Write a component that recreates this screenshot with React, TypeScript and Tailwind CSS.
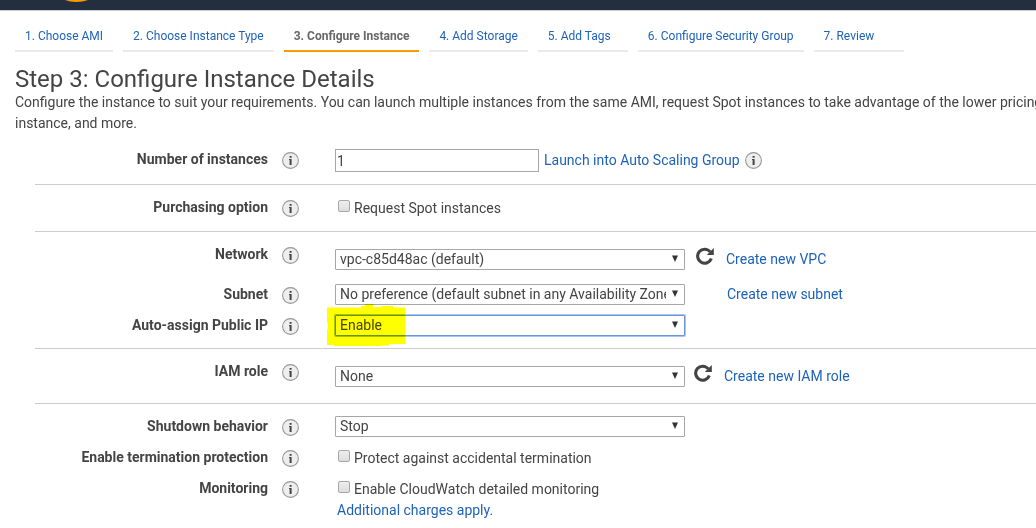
import type { ReactNode } from "react";

type Step = { label: string; current?: boolean };

const steps: Step[] = [
  { label: "1. Choose AMI" },
  { label: "2. Choose Instance Type" },
  { label: "3. Configure Instance", current: true },
  { label: "4. Add Storage" },
  { label: "5. Add Tags" },
  { label: "6. Configure Security Group" },
  { label: "7. Review" },
];

function InfoButton({ topic }: { topic: string }) {
  return (
    <button type="button" aria-label={`About ${topic}`} className="block size-[17px] shrink-0">
      <svg viewBox="0 0 17 17" className="size-full" aria-hidden="true">
        <circle cx="8.5" cy="8.5" r="7.9" fill="#eeeeee" stroke="#999999" strokeWidth="1.1" />
        <path d="M7.6 4h2v1.8h-2zM7 7h2.6v6h-2V8.1H7z" fill="#444444" />
      </svg>
    </button>
  );
}

function RefreshButton({ label }: { label: string }) {
  return (
    <button type="button" aria-label={label} className="block size-[18px] shrink-0">
      <svg viewBox="0 0 18 18" className="size-full" aria-hidden="true">
        <path d="M14.2 4.9A7 7 0 1 0 15.3 11.4" fill="none" stroke="#444444" strokeWidth="3.1" />
        <path d="M17.8 1V7.9H10.8z" fill="#444444" />
      </svg>
    </button>
  );
}

function TextLink({ children }: { children: ReactNode }) {
  return (
    <a href="#" className="whitespace-nowrap text-[#1e62b8] hover:underline">
      {children}
    </a>
  );
}

function Section({ children, className = "pb-3" }: { children: ReactNode; className?: string }) {
  return (
    <div className={`flex flex-col gap-[9px] border-b border-[#cccccc] pt-3 last:border-b-0 ${className}`}>
      {children}
    </div>
  );
}

type RowProps = { id: string; label: string; children: ReactNode; className?: string };

function Row({ id, label, children, className = "" }: RowProps) {
  return (
    <div className="flex min-h-[22px] items-start">
      <label htmlFor={id} className="w-[233px] shrink-0 text-right font-bold">
        {label}
      </label>
      <div className="ml-3.5 mr-9 pt-[3px]">
        <InfoButton topic={label} />
      </div>
      <div className={`min-w-0 grow ${className}`}>{children}</div>
    </div>
  );
}

function Dropdown({ id, value, focused = false }: { id: string; value: string; focused?: boolean }) {
  return (
    <div className="relative w-[350px] shrink-0">
      <select
        id={id}
        className={`block h-[21px] w-full appearance-none rounded-[1px] border bg-white pl-1 pr-[18px] leading-[19px] outline-none ${
          focused ? "border-[#6a95dc] ring-1 ring-[#a9c5f5]" : "border-[#a6a6a6]"
        }`}
      >
        <option>{value}</option>
      </select>
      <svg viewBox="0 0 6 7" className="pointer-events-none absolute right-[7px] top-[6px] h-[7px] w-[6px]" aria-hidden="true">
        <path d="M0 .5h6L3 7z" fill="#333333" />
      </svg>
    </div>
  );
}

function Checkbox({ id, label }: { id: string; label: string }) {
  return (
    <div className="ml-[3px] flex items-start gap-1 pt-px">
      <input
        id={id}
        type="checkbox"
        className="mt-[2px] size-3 shrink-0 appearance-none rounded-[2px] border border-[#a8a8a8] bg-linear-to-b from-[#eeeeee] to-[#dddddd]"
      />
      <label htmlFor={id}>{label}</label>
    </div>
  );
}

export default function App() {
  return (
    <div className="overflow-hidden bg-white font-[Roboto,'Liberation_Sans',sans-serif] text-[14px] leading-[21px] text-[#444444]">
      <header className="h-[11px] border-b border-[#cccccc] bg-[#232f3e]">
        <svg viewBox="0 0 30 3" className="ml-[62px] block h-[3px] w-[30px]" aria-hidden="true">
          <path d="M3 0H26Q21 2.1 14.5 2.1T3 0z" fill="#ff9900" />
        </svg>
      </header>

      <nav aria-label="Launch steps" className="px-[15px] pt-[15px]">
        <ol className="flex gap-2.5 text-[12px] leading-5">
          {steps.map((step) => (
            <li
              key={step.label}
              className={`min-w-[90px] border-b-2 px-2.5 pb-1 ${
                step.current ? "border-[#ff9900] font-bold text-[#666666]" : "border-[#eaeaea] text-[#1e62b8]"
              }`}
            >
              <a href="#" aria-current={step.current ? "step" : undefined} className="whitespace-nowrap">
                {step.label}
              </a>
            </li>
          ))}
        </ol>
      </nav>

      <main className="pl-[15px]">
        <h1 className="pt-3.5 text-[24px] leading-[26px]">Step 3: Configure Instance Details</h1>
        <p className="whitespace-nowrap">
          Configure the instance to suit your requirements. You can launch multiple instances from the same AMI,
          request Spot instances to take advantage of the lower pricing
          <br />
          instance, and more.
        </p>

        <form className="ml-5 pt-[3px]">
          <Section>
            <Row id="count" label="Number of instances">
              <div className="flex items-center">
                <input
                  id="count"
                  type="text"
                  defaultValue="1"
                  className="block h-[23px] w-[204px] border border-[#a6a6a6] px-px outline-none"
                />
                <div className="mx-[5px]">
                  <TextLink>Launch into Auto Scaling Group</TextLink>
                </div>
                <InfoButton topic="Auto Scaling Groups" />
              </div>
            </Row>
          </Section>

          <Section>
            <Row id="spot" label="Purchasing option">
              <Checkbox id="spot" label="Request Spot instances" />
            </Row>
          </Section>

          <Section className="pb-[11px]">
            <Row id="network" label="Network" className="pb-[5px] pt-[5px]">
              <div className="flex items-start">
                <Dropdown id="network" value="vpc-c85d48ac (default)" />
                <div className="-mt-0.5 ml-[11px] mr-3">
                  <RefreshButton label="Refresh networks" />
                </div>
                <TextLink>Create new VPC</TextLink>
              </div>
            </Row>
            <Row id="subnet" label="Subnet">
              <div className="flex items-center gap-[42px]">
                <Dropdown id="subnet" value="No preference (default subnet in any Availability Zone)" />
                <TextLink>Create new subnet</TextLink>
              </div>
            </Row>
            <Row id="public-ip" label="Auto-assign Public IP">
              <div className="relative">
                <Dropdown id="public-ip" value="Enable" focused />
                <svg
                  viewBox="0 0 80 44"
                  className="pointer-events-none absolute -left-2 -top-3 h-11 w-20 mix-blend-multiply"
                  aria-hidden="true"
                >
                  <path
                    d="M0 4.5H34V3H38V1H46V4H54V3H66V4.5H78V41H62V42.5H54V43H7V42H0V26H.7V20H0z"
                    fill="#ffff00"
                  />
                </svg>
              </div>
            </Row>
          </Section>

          <Section className="pb-[11px]">
            <Row id="iam" label="IAM role" className="pb-[5px] pt-[5px]">
              <div className="flex items-start">
                <Dropdown id="iam" value="None" />
                <div className="-mt-0.5 ml-[9px] mr-3">
                  <RefreshButton label="Refresh IAM roles" />
                </div>
                <TextLink>Create new IAM role</TextLink>
              </div>
            </Row>
          </Section>

          <Section>
            <Row id="shutdown" label="Shutdown behavior">
              <Dropdown id="shutdown" value="Stop" />
            </Row>
            <Row id="termination" label="Enable termination protection">
              <Checkbox id="termination" label="Protect against accidental termination" />
            </Row>
            <Row id="monitoring" label="Monitoring">
              <Checkbox id="monitoring" label="Enable CloudWatch detailed monitoring" />
              <div className="ml-0.5">
                <TextLink>Additional charges apply.</TextLink>
              </div>
            </Row>
          </Section>
        </form>
      </main>
    </div>
  );
}
